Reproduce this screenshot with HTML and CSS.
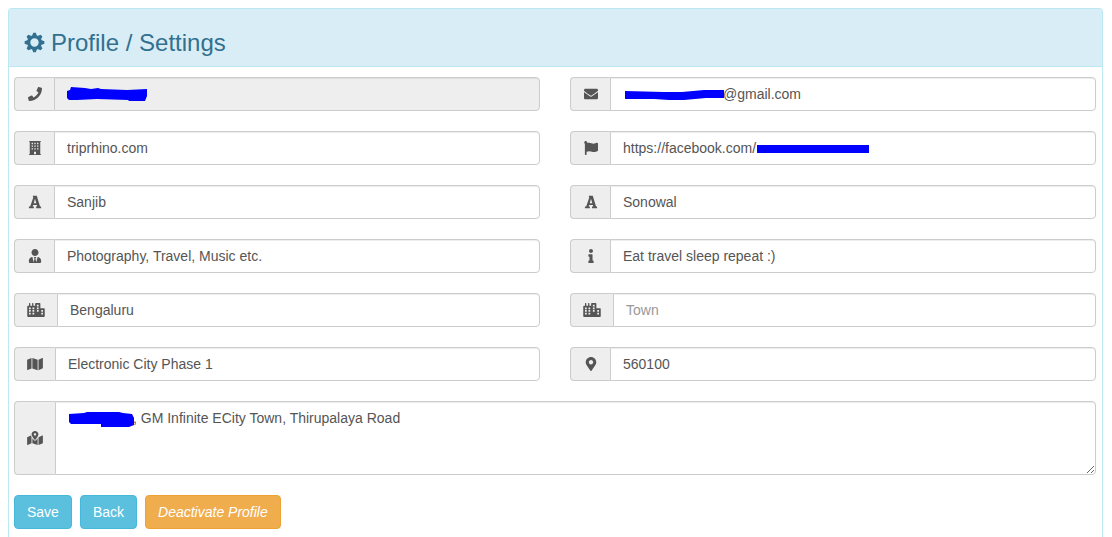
FILE: index.html
```html
<!DOCTYPE html>
<html lang="en">
<head>
<meta charset="utf-8">
<title>Profile / Settings</title>
<link rel="stylesheet" href="styles.css">
</head>
<body>
<svg class="sprite" aria-hidden="true">
  <symbol id="phone" viewBox="0 0 512 512"><path d="M493.4 24.6l-104-24c-11.3-2.6-22.9 3.3-27.5 13.9l-48 112c-4.2 9.8-1.4 21.3 6.9 28l60.6 49.6c-36 76.7-98.9 140.5-177.2 177.2l-49.6-60.6c-6.8-8.3-18.2-11.1-28-6.9l-112 48C3.9 366.5-2 378.1.6 389.4l24 104C27.1 504.2 36.7 512 48 512c256.1 0 464-207.5 464-464 0-11.2-7.7-20.9-18.6-23.4z"/></symbol>
  <symbol id="envelope" viewBox="0 0 512 512"><path d="M502.3 190.8c3.9-3.1 9.7-.2 9.7 4.7V400c0 26.5-21.5 48-48 48H48c-26.5 0-48-21.5-48-48V195.6c0-5 5.7-7.8 9.7-4.7 22.4 17.4 52.1 39.5 154.1 113.6 21.1 15.4 56.7 47.8 92.2 47.6 35.7.3 72-32.8 92.3-47.6 102-74.1 131.6-96.3 154-113.7zM256 320c23.2.4 56.6-29.2 73.4-41.4 132.7-96.3 142.8-104.7 173.4-128.7 5.8-4.5 9.2-11.5 9.2-18.9v-19c0-26.5-21.5-48-48-48H48c-26.5 0-48 21.5-48 48v19c0 7.4 3.4 14.3 9.2 18.9 30.6 23.9 40.7 32.4 173.4 128.7 16.8 12.2 50.2 41.8 73.4 41.4z"/></symbol>
  <symbol id="building" viewBox="0 0 448 512"><path fill-rule="evenodd" d="M448 512H0v-32h32V32H14V0h420v32h-18v448h32zM100 66h50v50h-50zM199 66h50v50h-50zM298 66h50v50h-50zM100 164h50v50h-50zM199 164h50v50h-50zM298 164h50v50h-50zM100 262h50v50h-50zM199 262h50v50h-50zM298 262h50v50h-50zM188 390h72v90h-72z"/></symbol>
  <symbol id="flag" viewBox="0 0 512 512"><path d="M349.565 98.783C295.978 98.783 251.721 64 184.348 64c-24.955 0-47.309 4.384-68.045 12.013a55.947 55.947 0 0 0 3.586-23.562C118.117 24.015 94.806 1.206 66.338.048 34.345-1.254 8 24.296 8 56c0 19.026 9.497 35.825 24 45.945V488c0 13.255 10.745 24 24 24h16c13.255 0 24-10.745 24-24v-94.4c28.311-12.064 63.582-22.122 114.435-22.122 53.588 0 97.844 34.783 165.217 34.783 48.169 0 86.667-16.294 122.505-40.858C506.84 359.452 512 349.571 512 339.045v-243.1c0-23.393-24.269-38.87-45.485-29.016-34.338 15.948-76.454 31.854-116.95 31.854z"/></symbol>
  <symbol id="font" viewBox="0 0 448 512"><path fill-rule="evenodd" d="M148 26H288L408 418H446V482H262V418H306L290 362H156L138 418H182V482H2V418H48L164 84H148zM176 300H272L224 136z"/></symbol>
  <symbol id="user" viewBox="0 0 448 512"><path d="M224 256c70.7 0 128-57.3 128-128S294.7 0 224 0 96 57.3 96 128s57.3 128 128 128zm95.8 32.6L272 480l-32-136 32-56h-96l32 56-32 136-47.8-191.4C56.9 292 0 350.3 0 422.4V464c0 26.5 21.5 48 48 48h352c26.5 0 48-21.5 48-48v-41.6c0-72.1-56.9-130.4-128.2-133.8z"/></symbol>
  <symbol id="info" viewBox="0 0 192 512"><path d="M20 424.229h20V279.771H20c-11.046 0-20-8.954-20-20V212c0-11.046 8.954-20 20-20h112c11.046 0 20 8.954 20 20v212.229h20c11.046 0 20 8.954 20 20V492c0 11.046-8.954 20-20 20H20c-11.046 0-20-8.954-20-20v-47.771c0-11.046 8.954-20 20-20zM96 0C56.235 0 24 32.235 24 72s32.235 72 72 72 72-32.235 72-72S135.764 0 96 0z"/></symbol>
  <symbol id="city" viewBox="0 0 640 512"><path fill-rule="evenodd" d="M616 192H480V24c0-13.26-10.74-24-24-24H312c-13.26 0-24 10.74-24 24v72h-64V16c0-8.84-7.16-16-16-16h-16c-8.84 0-16 7.16-16 16v80h-64V16c0-8.84-7.16-16-16-16H80c-8.84 0-16 7.16-16 16v80H24c-13.26 0-24 10.74-24 24v360c0 17.67 14.33 32 32 32h576c17.67 0 32-14.33 32-32V216c0-13.26-10.75-24-24-24zM64 160h64v64H64zM192 160h64v64h-64zM64 256h64v64H64zM192 256h64v64h-64zM64 352h64v64H64zM192 352h64v64h-64zM352 64h64v64h-64zM352 160h64v64h-64zM352 256h64v64h-64zM512 256h64v64h-64zM512 352h64v64h-64z"/></symbol>
  <symbol id="map" viewBox="0 0 576 512"><path d="M0 117.66v346.32c0 11.32 11.43 19.06 21.94 14.86L160 416V32L20.12 87.95A32.006 32.006 0 0 0 0 117.66zM192 416l192 64V96L192 32v384zM554.06 33.16L416 96v384l139.88-55.95A31.996 31.996 0 0 0 576 394.34V48.02c0-11.32-11.43-19.06-21.94-14.86z"/></symbol>
  <symbol id="marker" viewBox="0 0 384 512"><path d="M172.268 501.67C26.97 291.031 0 269.413 0 192 0 85.961 85.961 0 192 0s192 85.961 192 192c0 77.413-26.97 99.031-172.268 309.67-9.535 13.774-29.93 13.773-39.464 0zM192 272c44.183 0 80-35.817 80-80s-35.817-80-80-80-80 35.817-80 80 35.817 80 80 80z"/></symbol>
  <symbol id="map-marked" viewBox="0 0 576 512"><path d="M288 0c-69.59 0-126 56.41-126 126 0 56.26 82.35 158.8 113.9 196.02 6.39 7.54 17.82 7.54 24.2 0C331.65 284.8 414 182.26 414 126 414 56.41 357.59 0 288 0zm0 168c-23.2 0-42-18.8-42-42s18.8-42 42-42 42 18.8 42 42-18.8 42-42 42zM20.12 215.95A32.006 32.006 0 0 0 0 245.66v250.32c0 11.32 11.43 19.06 21.94 14.86L160 448V214.92c-8.84-15.98-16.07-31.54-21.25-46.42L20.12 215.95zM288 359.67c-14.07 0-27.38-6.18-36.51-16.96-19.66-23.2-40.57-49.62-59.49-76.72v182l192 64V266c-18.92 27.09-39.82 53.52-59.49 76.72-9.13 10.77-22.44 16.95-36.51 16.95zm266.06-198.51L416 224v288l139.88-55.95A31.996 31.996 0 0 0 576 426.34V176.02c0-11.32-11.43-19.06-21.94-14.86z"/></symbol>
</svg>

<main class="panel">
  <header class="panel-heading">
    <h3 class="panel-title">
      <svg class="gear" viewBox="-10 -10 20 20" aria-hidden="true">
        <circle r="5.500" fill="none" stroke="currentColor" stroke-width="3"/>
        <g fill="currentColor">
          <path id="tooth" d="M-2.400-6.300L-1.200-9.400H1.200L2.400-6.300z"/>
          <use href="#tooth" transform="rotate(45)"/><use href="#tooth" transform="rotate(90)"/><use href="#tooth" transform="rotate(135)"/><use href="#tooth" transform="rotate(180)"/><use href="#tooth" transform="rotate(225)"/><use href="#tooth" transform="rotate(270)"/><use href="#tooth" transform="rotate(315)"/>
        </g>
      </svg>
      Profile / Settings
    </h3>
  </header>
  <form class="panel-body">
    <div class="fields">
      <div class="input-group">
        <label class="addon" for="f-phone"><svg class="icon" role="img" aria-label="Phone"><use href="#phone"/></svg></label>
        <div class="control"><input id="f-phone" type="tel" disabled>
          <svg class="redaction redaction-phone" viewBox="0 0 80 14" aria-hidden="true"><path d="M0 4L3 3 4 0 18 1 24 2 31 1 34 2 60 3 80 2V9L78 14H62L61 13 30 12 10 13 2 13 0 11z"/></svg></div>
      </div>
      <div class="input-group">
        <label class="addon" for="f-email"><svg class="icon" role="img" aria-label="Email"><use href="#envelope"/></svg></label>
        <div class="control"><input id="f-email" class="after-redaction" type="text" value="@gmail.com">
          <svg class="redaction redaction-email" viewBox="0 0 100 12" aria-hidden="true"><path d="M1 2L40 3 58 3 80 1 100 1V9L82 9 60 11 45 11 30 10 1 10z"/></svg></div>
      </div>
      <div class="input-group">
        <label class="addon" for="f-site"><svg class="icon" role="img" aria-label="Website"><use href="#building"/></svg></label>
        <div class="control"><input id="f-site" type="text" value="triprhino.com"></div>
      </div>
      <div class="input-group">
        <label class="addon" for="f-social"><svg class="icon" role="img" aria-label="Facebook page"><use href="#flag"/></svg></label>
        <div class="control"><input id="f-social" type="text" value="https://facebook.com/">
          <svg class="redaction redaction-social" viewBox="0 0 112 9" aria-hidden="true"><path d="M0 1H112V9H0z"/></svg></div>
      </div>
      <div class="input-group">
        <label class="addon" for="f-first"><svg class="icon" role="img" aria-label="First name"><use href="#font"/></svg></label>
        <div class="control"><input id="f-first" type="text" value="Sanjib"></div>
      </div>
      <div class="input-group">
        <label class="addon" for="f-last"><svg class="icon" role="img" aria-label="Last name"><use href="#font"/></svg></label>
        <div class="control"><input id="f-last" type="text" value="Sonowal"></div>
      </div>
      <div class="input-group">
        <label class="addon" for="f-interests"><svg class="icon" role="img" aria-label="Interests"><use href="#user"/></svg></label>
        <div class="control"><input id="f-interests" type="text" value="Photography, Travel, Music etc."></div>
      </div>
      <div class="input-group">
        <label class="addon" for="f-about"><svg class="icon" role="img" aria-label="About"><use href="#info"/></svg></label>
        <div class="control"><input id="f-about" type="text" value="Eat travel sleep repeat :)"></div>
      </div>
      <div class="input-group">
        <label class="addon addon-city" for="f-city"><svg class="icon icon-city" role="img" aria-label="City"><use href="#city"/></svg></label>
        <div class="control"><input id="f-city" type="text" value="Bengaluru"></div>
      </div>
      <div class="input-group">
        <label class="addon addon-city" for="f-town"><svg class="icon icon-city" role="img" aria-label="Town"><use href="#city"/></svg></label>
        <div class="control"><input id="f-town" type="text" placeholder="Town"></div>
      </div>
      <div class="input-group">
        <label class="addon addon-map" for="f-area"><svg class="icon icon-map" role="img" aria-label="Area"><use href="#map"/></svg></label>
        <div class="control"><input id="f-area" type="text" value="Electronic City Phase 1"></div>
      </div>
      <div class="input-group">
        <label class="addon" for="f-pin"><svg class="icon" role="img" aria-label="Postal code"><use href="#marker"/></svg></label>
        <div class="control"><input id="f-pin" type="text" value="560100"></div>
      </div>
      <div class="input-group wide">
        <label class="addon addon-map" for="f-address"><svg class="icon icon-map" role="img" aria-label="Address"><use href="#map-marked"/></svg></label>
        <div class="control"><textarea id="f-address" rows="3">, GM Infinite ECity Town, Thirupalaya Road</textarea>
          <svg class="redaction redaction-address" viewBox="0 0 66 16" aria-hidden="true"><path d="M0 2L15 1 18 0 50 0 54 1 63 2 65 6V13L60 15H32V12L16 12 2 12 0 10z"/></svg></div>
      </div>
    </div>
    <div class="actions">
      <button class="btn" type="button">Save</button>
      <button class="btn" type="button">Back</button>
      <button class="btn btn-warning" type="button">Deactivate Profile</button>
    </div>
  </form>
</main>
</body>
</html>
```
FILE: styles.css
```css
* { box-sizing: border-box; }

body {
  margin: 8px 9px 0 8px;
  background: #fff;
  color: #333;
  font: 14px/20px "Liberation Sans", Arial, sans-serif;
}

.sprite { position: absolute; width: 0; height: 0; }

.panel {
  min-height: calc(100vh - 8px);
  border: 1px solid #bce8f1;
  border-bottom: 0;
  border-radius: 4px 4px 0 0;
}

.panel-heading {
  padding: 20px 15px 10px;
  border-bottom: 1px solid #bce8f1;
  border-radius: 3px 3px 0 0;
  background: #d9edf7;
  color: #31708f;
}

.panel-title {
  display: flex;
  align-items: center;
  gap: 6px;
  margin: 0;
  font-size: 24px;
  font-weight: 400;
  line-height: 27px;
}

.gear { width: 21px; height: 21px; }

.panel-body { padding: 10px 6px 10px 5px; }

.fields {
  display: grid;
  grid-template-columns: 1fr 1fr;
  gap: 20px 30px;
}

.wide { grid-column: 1 / -1; }

.input-group { display: flex; min-width: 0; }

.addon {
  display: flex;
  flex: none;
  align-items: center;
  justify-content: center;
  width: 40px;
  border: 1px solid #ccc;
  border-right: 0;
  border-radius: 4px 0 0 4px;
  background: #eee;
  color: #555;
}
.addon-map { width: 41px; }
.addon-city { width: 43px; }

.icon { width: 14px; height: 14px; fill: currentColor; }
.icon-map { width: 16px; }
.icon-city { width: 18px; }

.control { position: relative; display: flex; flex: 1; min-width: 0; }

input, textarea {
  width: 100%;
  margin: 0;
  padding: 6px 12px;
  border: 1px solid #ccc;
  border-radius: 0 4px 4px 0;
  background: #fff;
  box-shadow: inset 0 1px 1px rgba(0, 0, 0, .075);
  color: #555;
  font: inherit;
}
input { height: 34px; }
textarea { height: 74px; resize: vertical; text-indent: 65px; }
input:disabled { background: #eee; }
input::placeholder { color: #999; opacity: 1; }
.after-redaction { padding-left: 112px; }

/* Marker strokes drawn over private values */
.redaction { position: absolute; fill: #00f; pointer-events: none; }
.redaction-phone { left: 13px; top: 10px; width: 80px; height: 14px; }
.redaction-email { left: 14px; top: 12px; width: 100px; height: 12px; }
.redaction-social { left: 147px; top: 13px; width: 112px; height: 9px; }
.redaction-address { left: 14px; top: 11px; width: 66px; height: 16px; }

.actions { display: flex; gap: 8px; margin-top: 20px; }

.btn {
  padding: 6px 12px;
  border: 1px solid #46b8da;
  border-radius: 4px;
  background: #5bc0de;
  color: #fff;
  font: inherit;
}
.btn-warning {
  border-color: #eea236;
  background: #f0ad4e;
  font-style: italic;
}
```
